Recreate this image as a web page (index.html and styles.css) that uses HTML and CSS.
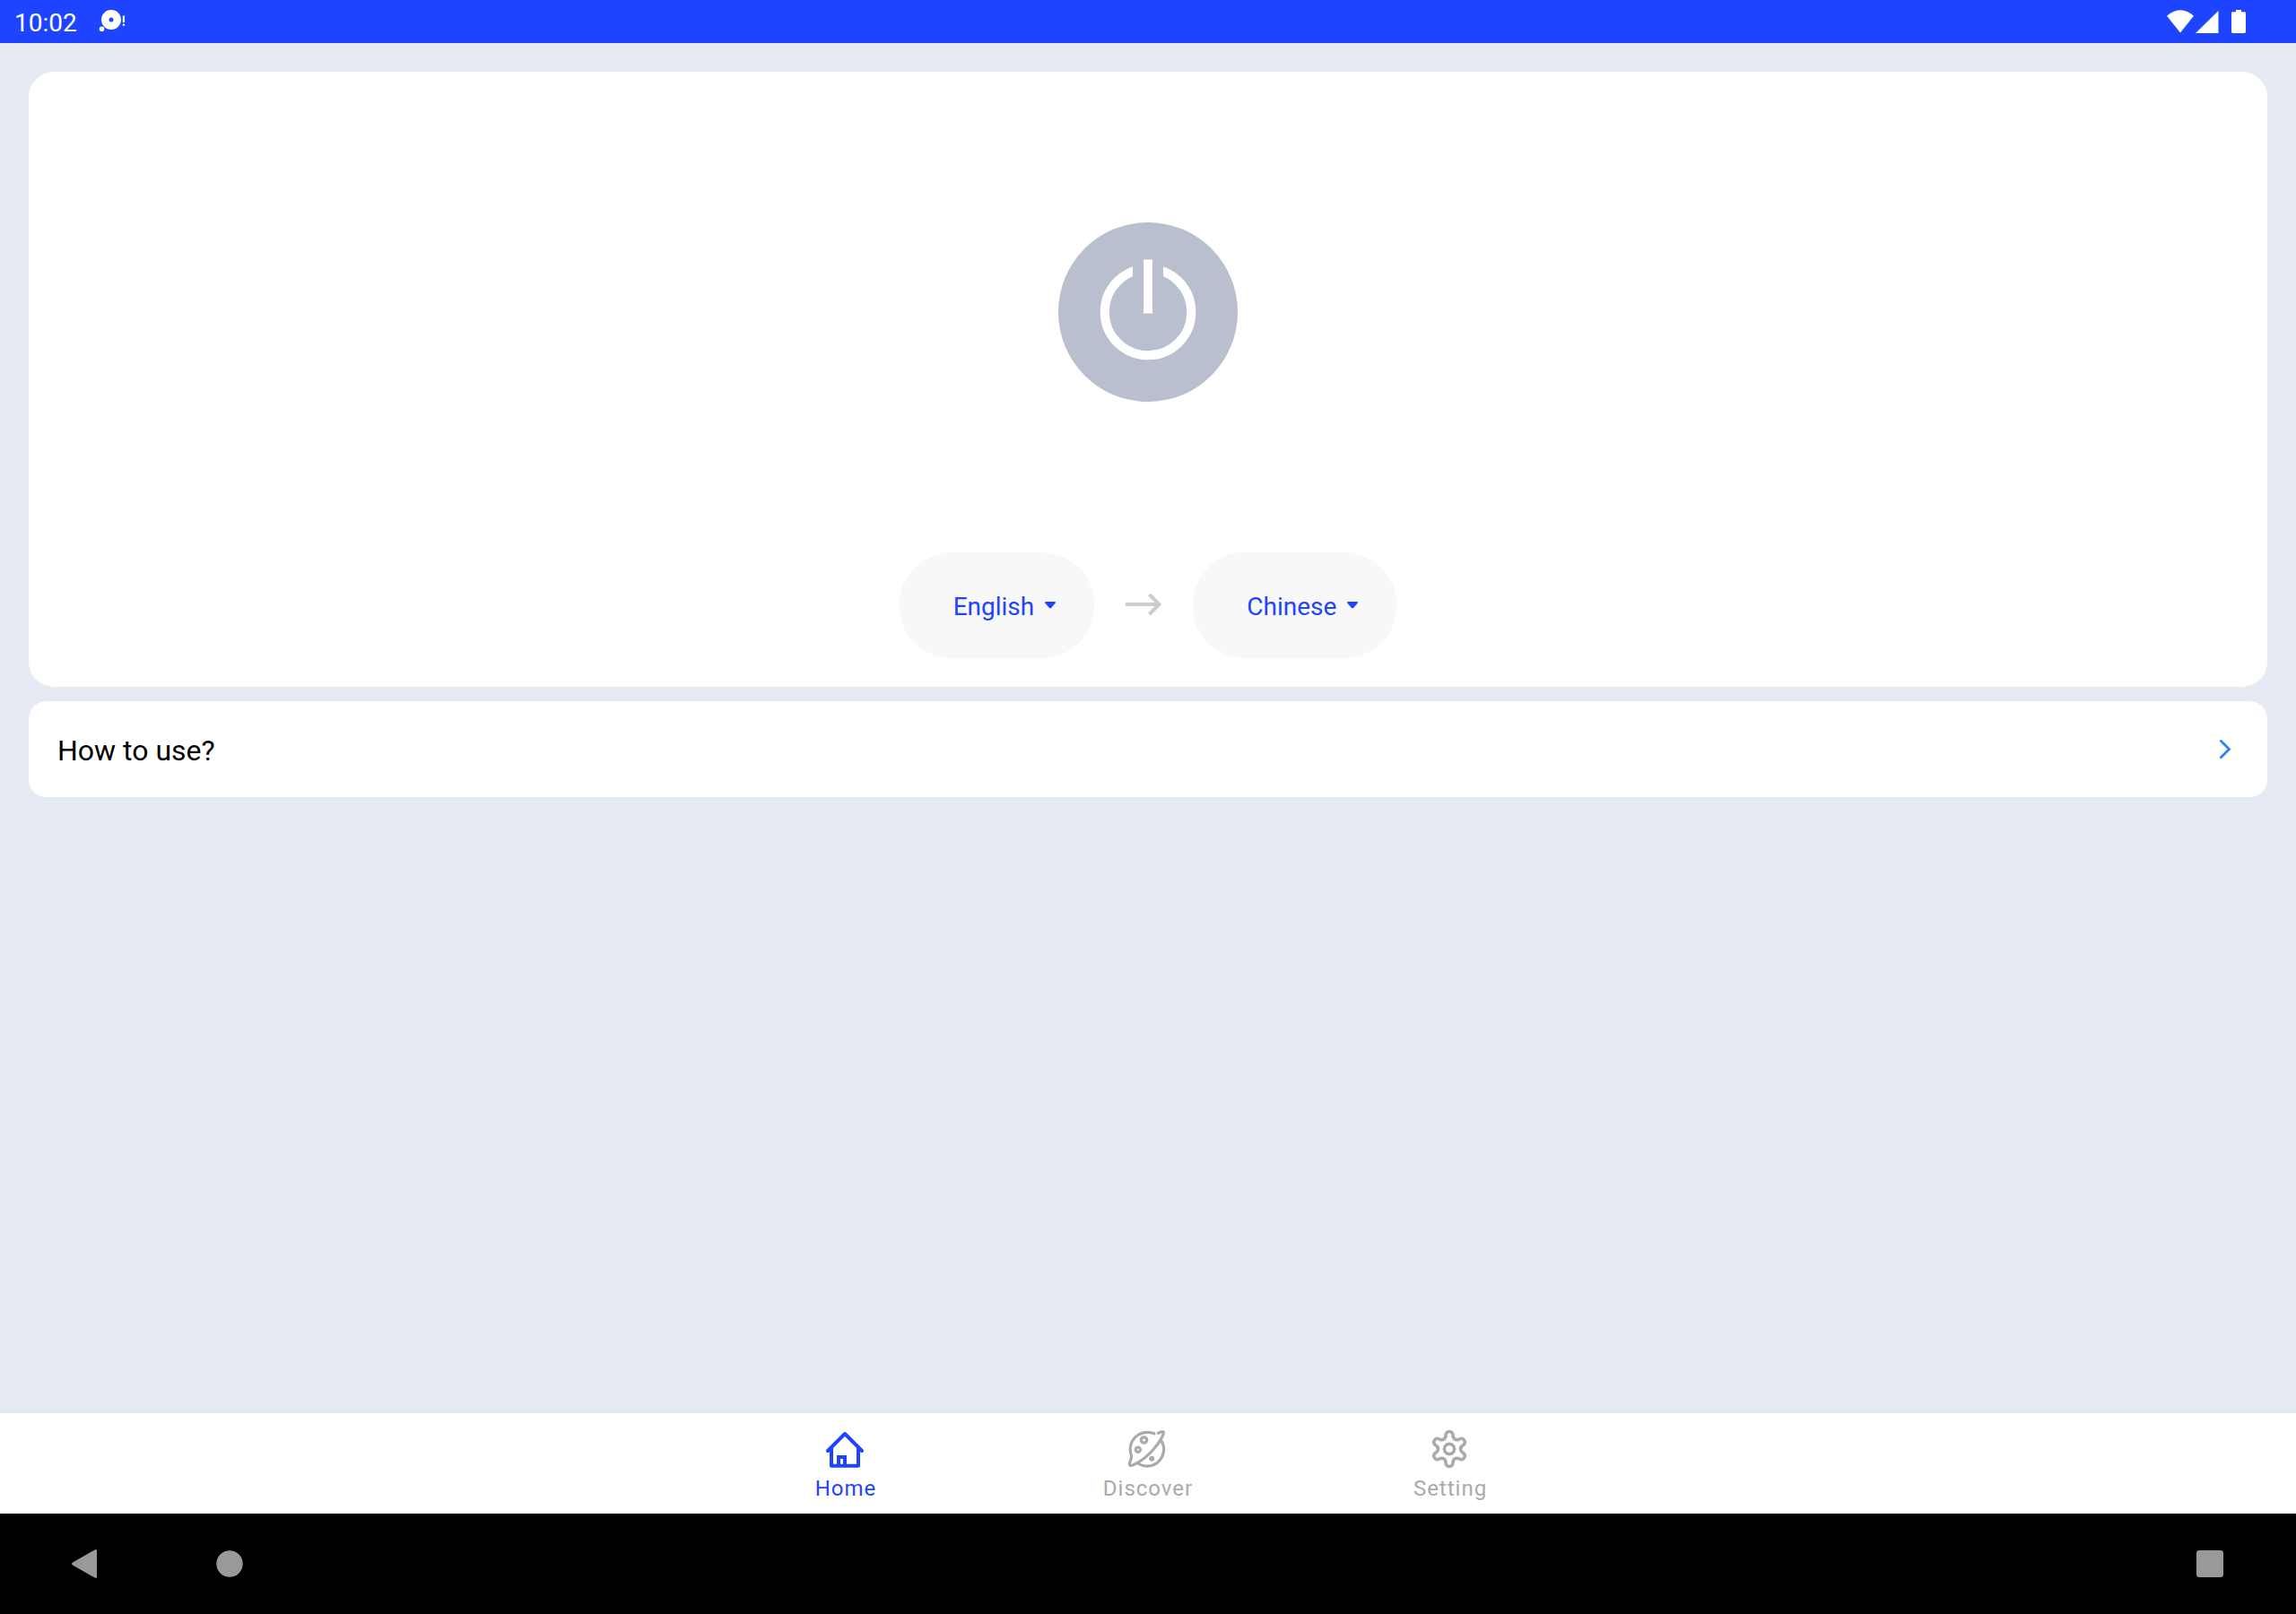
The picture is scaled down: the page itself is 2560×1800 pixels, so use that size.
FILE: index.html
```html
<!DOCTYPE html>
<html lang="en">
<head>
  <meta charset="UTF-8">
  <meta name="viewport" content="width=device-width, initial-scale=1.0">
  <title>Home</title>
  <link rel="stylesheet" href="styles.css">
</head>
<body>
  <header class="status-bar">
    <span class="time">10:02</span>
    <svg class="notification" width="32" height="26" viewBox="0 0 32 26" fill="#fff">
      <path fill-rule="evenodd" d="M14 0a11 11 0 1 1 0 22a11 11 0 1 1 0-22zM14 8.500a2.500 2.500 0 1 0 0 5a2.500 2.500 0 1 0 0-5z"/>
      <circle cx="3.500" cy="21.300" r="2.800"/>
      <rect x="26.800" y="6.500" width="2.200" height="7.500"/>
      <rect x="26.800" y="15.600" width="2.200" height="2.200"/>
    </svg>
    <div class="status-icons">
      <svg width="30" height="26" viewBox="0 0 30 26" fill="#fff"><path d="M0 6.800C9-2 21-2 30 6.800L15 25.500z"/></svg>
      <svg width="26" height="26" viewBox="0 0 26 26" fill="#fff"><path d="M0 26L25.500 1v25z"/></svg>
      <svg class="battery" width="16" height="26" viewBox="0 0 16 26" fill="#fff"><path d="M5 0h6v2.200h3.600Q16 2.200 16 3.600v21Q16 26 14.600 26H1.400Q0 26 0 24.600v-21Q0 2.200 1.400 2.200H5z"/></svg>
    </div>
  </header>

  <main class="content">
    <section class="card translate-card">
      <button class="power" aria-label="Power">
        <svg width="200" height="200" viewBox="0 0 200 200">
          <circle cx="100" cy="100" r="100" fill="#babfd0"/>
          <circle cx="100" cy="100" r="48.300" fill="none" stroke="#fff" stroke-width="10"/>
          <rect x="83" y="40" width="34" height="30" fill="#babfd0"/>
          <rect x="95" y="41.500" width="10" height="60" fill="#fff"/>
        </svg>
      </button>
      <div class="languages">
        <label class="pill">
          <select aria-label="From language">
            <option selected>English</option>
            <option>Chinese</option>
          </select>
          <svg width="12" height="8" viewBox="0 0 12 8"><path d="M1 0h10q1 0 1 1.200L7 7q-1 .9-2 0L0 1.200Q0 0 1 0z" fill="#1f44ff"/></svg>
        </label>
        <svg class="arrow" width="40" height="28" viewBox="0 0 40 28" fill="none" stroke="#ccc" stroke-width="4"><path d="M0 13h37M26.500 2l11 11-11 11"/></svg>
        <label class="pill">
          <select aria-label="To language">
            <option>English</option>
            <option selected>Chinese</option>
          </select>
          <svg width="12" height="8" viewBox="0 0 12 8"><path d="M1 0h10q1 0 1 1.200L7 7q-1 .9-2 0L0 1.200Q0 0 1 0z" fill="#1f44ff"/></svg>
        </label>
      </div>
    </section>

    <a class="card help" href="#">
      <span>How to use?</span>
      <svg width="14" height="24" viewBox="0 0 14 24" fill="none" stroke="#2a80f5" stroke-width="2.800"><path d="M1.500 .5L11.500 10.500l-10 10"/></svg>
    </a>
  </main>

  <nav class="tabs">
    <a class="tab active" href="#">
      <svg width="48" height="48" viewBox="0 0 48 48" fill="none" stroke="currentColor" stroke-width="4" stroke-linecap="round" stroke-linejoin="round">
        <path d="M4 26L23 7l19 19M8 23v19.700h30V23"/>
        <path d="M16 42V33h7v9" stroke-linejoin="miter"/>
      </svg>
      <span>Home</span>
    </a>
    <a class="tab" href="#">
      <svg width="48" height="48" viewBox="0 0 48 48" fill="none" stroke="currentColor" stroke-width="3.200" stroke-linecap="round" stroke-linejoin="round">
        <path d="M31 6.800C27 5 19 4.300 13.500 8C6 12.500 2.500 21 5 29.500C6.300 33 5.500 34 4 38C3 42 3 43 7 42C20 37 34 22 40 10C42 6 42 3.500 38.500 5L35.500 6.300"/>
        <path d="M38.500 14.500C44 22 42 33 34 39.500C28 44 19 44.500 12.500 39.800"/>
        <circle cx="19.500" cy="14" r="3.200"/>
        <circle cx="12.800" cy="24.700" r="2.600"/>
        <circle cx="28.200" cy="34.700" r="3" fill="currentColor" stroke="none"/>
      </svg>
      <span>Discover</span>
    </a>
    <a class="tab" href="#">
      <svg width="48" height="48" viewBox="0 0 48 48" fill="none" stroke="currentColor" stroke-width="3.600" stroke-linejoin="round">
        <g transform="translate(23 24)">
          <path d="M-4-14V-15.500A4 4 0 0 1 4-15.500V-14Q5.500-9.530 10.120-10.460L11.420-11.210A4 4 0 0 1 15.420-4.290L14.120-3.540Q11 0 14.120 3.540L15.420 4.290A4 4 0 0 1 11.420 11.210L10.120 10.460Q5.500 9.530 4 14V15.500A4 4 0 0 1-4 15.500V14Q-5.500 9.530-10.120 10.460L-11.420 11.210A4 4 0 0 1-15.420 4.290L-14.120 3.540Q-11 0-14.120-3.540L-15.420-4.290A4 4 0 0 1-11.420-11.210L-10.120-10.460Q-5.500-9.530-4-14z"/>
          <circle r="5.600"/>
        </g>
      </svg>
      <span>Setting</span>
    </a>
  </nav>

  <footer class="system-bar">
    <button aria-label="Back"><svg width="32" height="32" viewBox="0 0 32 32" fill="#999"><path d="M25.500.4Q28-.8 28 1.800V30.200Q28 32.800 25.500 31.600L1 17.500Q-1 16 1 14.500z"/></svg></button>
    <button aria-label="Overview home"><svg width="32" height="32" viewBox="0 0 32 32" fill="#999"><circle cx="16" cy="16" r="14.700"/></svg></button>
    <button class="recent" aria-label="Recent apps"><svg width="32" height="32" viewBox="0 0 32 32" fill="#999"><rect x="1" y="1" width="30" height="30" rx="3"/></svg></button>
  </footer>
</body>
</html>
```

FILE: styles.css
```css
* {
  box-sizing: border-box;
}
body {
  margin: 0;
  min-height: 100vh;
  display: flex;
  flex-direction: column;
  font-family: Roboto, sans-serif;
  background-color: #e5eaf3;
  color: #000;
}
svg {
  display: block;
  flex: none;
}
a {
  color: inherit;
  text-decoration: none;
}
button {
  padding: 0;
  border: none;
  background: none;
  cursor: pointer;
}

.status-bar {
  display: flex;
  align-items: center;
  height: 48px;
  padding: 0 56px 0 16px;
  background-color: #1f44ff;
  color: #fff;
}
.time {
  font-size: 28px;
  line-height: 32px;
  padding-top: 4px;
}
.notification {
  margin-left: 24px;
}
.status-icons {
  display: flex;
  gap: 2px;
  margin-left: auto;
}
.battery {
  margin-left: 12px;
}

.content {
  flex: 1;
  display: flex;
  flex-direction: column;
  gap: 16px;
  padding: 32px;
}
.card {
  background-color: #fff;
  border-radius: 20px;
}
.translate-card {
  display: flex;
  flex-direction: column;
  align-items: center;
  gap: 168px;
  padding: 168px 32px 32px;
  border-radius: 28px;
}
.power {
  border-radius: 50%;
}
.languages {
  display: flex;
  align-items: center;
  gap: 35px;
}
.pill {
  display: flex;
  align-items: center;
  gap: 12px;
  height: 118px;
  padding: 0 43px 0 60px;
  border-radius: 58px;
  background-color: #f8f8f8;
}
.pill select {
  appearance: none;
  field-sizing: content;
  padding: 4px 0 0;
  border: none;
  background: none;
  font-family: inherit;
  font-size: 28px;
  line-height: 32px;
  color: #1f44ff;
  cursor: pointer;
}
.help {
  display: flex;
  align-items: center;
  justify-content: space-between;
  padding: 36px 40px 33px 32px;
  font-size: 32px;
  line-height: 38px;
}

.tabs {
  display: flex;
  justify-content: center;
  height: 112px;
  background-color: #fff;
  box-shadow: 0 0 8px rgba(0, 0, 0, 0.06);
}
.tab {
  display: flex;
  flex-direction: column;
  align-items: center;
  gap: 6px;
  width: 337px;
  padding-top: 16px;
  font-size: 24px;
  line-height: 28px;
  letter-spacing: 1px;
  color: #aaa;
}
.tab.active {
  color: #1f44ff;
}

.system-bar {
  position: relative;
  display: flex;
  height: 112px;
  padding: 0 16px;
  background-color: #000;
}
.system-bar button {
  display: flex;
  align-items: center;
  justify-content: center;
  width: 160px;
}
.system-bar .recent {
  margin-left: auto;
}
```
